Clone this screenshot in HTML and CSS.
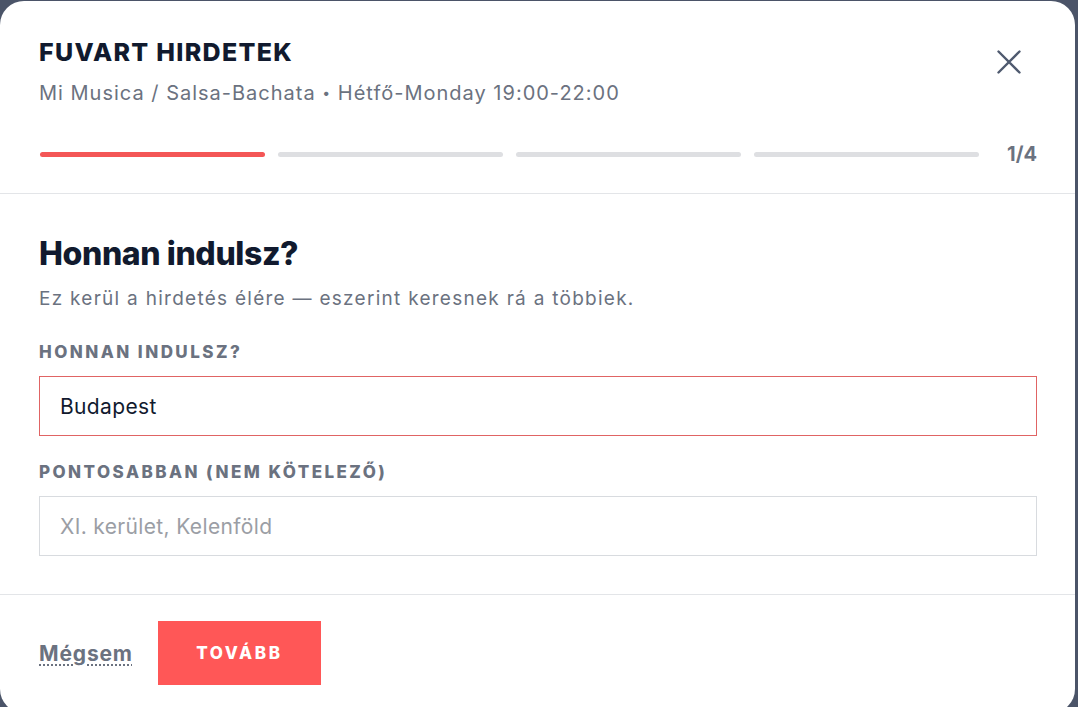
FILE: index.html
```html
<!DOCTYPE html>
<html lang="hu">
<head>
<meta charset="utf-8">
<title>Fuvart hirdetek</title>
<link rel="stylesheet" href="styles.css">
</head>
<body>
<div class="modal">
  <header class="modal-header">
    <div class="title-row">
      <div class="titles">
        <h1 class="title">FUVART HIRDETEK</h1>
        <p class="subtitle">Mi Musica / Salsa-Bachata <span class="dot">•</span> Hétfő-Monday 19:00-22:00</p>
      </div>
      <button class="close" aria-label="Bezárás">
        <svg width="24" height="24" viewBox="0 0 24 24" fill="none" stroke="currentColor" stroke-width="2.4" stroke-linecap="round">
          <path d="M1.5 1.5 L22.5 22.5 M22.5 1.5 L1.5 22.5"/>
        </svg>
      </button>
    </div>
    <div class="progress-row">
      <div class="bars">
        <span class="bar active"></span>
        <span class="bar"></span>
        <span class="bar"></span>
        <span class="bar"></span>
      </div>
      <span class="step">1/4</span>
    </div>
  </header>
  <main class="modal-body">
    <h2 class="heading">Honnan indulsz?</h2>
    <p class="desc">Ez kerül a hirdetés élére — eszerint keresnek rá a többiek.</p>
    <label class="label">HONNAN INDULSZ?</label>
    <div class="input input-error">Budapest</div>
    <label class="label label-2">PONTOSABBAN (NEM KÖTELEZŐ)</label>
    <div class="input placeholder">XI. kerület, Kelenföld</div>
  </main>
  <footer class="modal-footer">
    <a class="cancel">Mégsem</a>
    <button class="next">TOVÁBB</button>
  </footer>
</div>
</body>
</html>
```
FILE: styles.css
```css
* { box-sizing: border-box; }
html, body { margin: 0; padding: 0; }
body {
  background: #4b5468;
  height: 707px;
  overflow: hidden;
  font-family: Inter, "Liberation Sans", sans-serif;
}
.modal {
  margin-top: 1px;
  width: 1075px;
  height: 712px;
  background: #ffffff;
  border-radius: 24px;
  display: flex;
  flex-direction: column;
}
.modal-header {
  padding: 36px 38px 27px 39px;
  border-bottom: 1px solid #e3e5e8;
}
.title-row {
  display: flex;
  justify-content: space-between;
  align-items: flex-start;
}
.title {
  margin: 0;
  font-size: 25px;
  line-height: 30px;
  font-weight: 800;
  letter-spacing: 1.3px;
  color: #111a2e;
}
.subtitle {
  margin: 13px 0 0;
  font-size: 20px;
  line-height: 26px;
  letter-spacing: 1px;
  color: #6b7280;
}
.dot {
  font-size: 14px;
  vertical-align: 2px;
}
.close {
  margin: 13px 16px 0 0;
  padding: 0;
  border: 0;
  background: none;
  color: #4f5a6f;
  width: 24px;
  height: 24px;
  display: flex;
}
.progress-row {
  margin-top: 36px;
  display: flex;
  align-items: center;
  gap: 28px;
  height: 24px;
}
.bars {
  flex: 1;
  display: flex;
  gap: 13px;
  padding-left: 1px;
}
.bar {
  flex: 1;
  height: 5px;
  border-radius: 3px;
  background: #dedfe2;
}
.bar.active { background: #f45656; }
.step {
  font-size: 20px;
  line-height: 24px;
  font-weight: 700;
  color: #6b7280;
}
.modal-body {
  padding: 41px 38px 38px 39px;
  display: flex;
  flex-direction: column;
  border-bottom: 1px solid #e3e5e8;
}
.heading {
  margin: 0;
  font-size: 32px;
  line-height: 38px;
  font-weight: 800;
  letter-spacing: -0.4px;
  color: #111a2e;
}
.desc {
  margin: 13px 0 0;
  font-size: 19px;
  line-height: 26px;
  letter-spacing: 1.27px;
  color: #6b7280;
}
.label {
  margin-top: 30px;
  font-size: 17px;
  line-height: 20px;
  font-weight: 800;
  letter-spacing: 2.45px;
  color: #6b7280;
}
.label-2 { margin-top: 26px; }
.input {
  margin-top: 14px;
  height: 60px;
  border: 1px solid #d8dbdf;
  padding: 0 20px;
  display: flex;
  align-items: center;
  font-size: 21px;
  letter-spacing: 0.35px;
  color: #111a2e;
}
.input-error { border-color: #e06464; }
.placeholder { color: #9b9ea5; }
.modal-footer {
  padding: 26px 39px 0;
  display: flex;
  align-items: center;
  gap: 25px;
}
.cancel {
  font-size: 21px;
  font-weight: 700;
  letter-spacing: 0.85px;
  color: #6b7280;
  text-decoration: underline dotted;
  text-decoration-thickness: 2px;
  text-underline-offset: 4px;
}
.next {
  width: 163px;
  height: 64px;
  border: 0;
  padding: 0;
  background: #ff5757;
  color: #ffffff;
  font-family: Inter, "Liberation Sans", sans-serif;
  font-size: 17px;
  font-weight: 800;
  letter-spacing: 2.6px;
}
```
